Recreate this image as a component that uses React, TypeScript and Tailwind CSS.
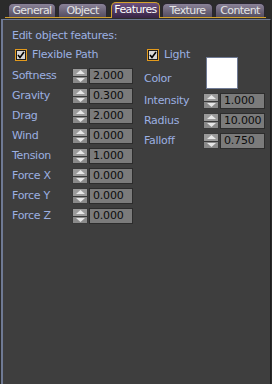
import React from "react";

const font = { fontFamily: '"DejaVu Sans", sans-serif' };

function Tab({ label, width, active }: { label: string; width: string; active?: boolean }) {
  if (active) {
    return (
      <div className={`${width} h-[15px] mt-[2px] rounded-t-[5px] border border-b-0 border-[#d4a22c] bg-gradient-to-b from-[#6d5080] to-[#3b2748] text-white text-[11px] tracking-[-0.6px] leading-[14px] flex items-center justify-center`}>
        {label}
      </div>
    );
  }
  return (
    <div className={`${width} h-[14px] mt-[3px] rounded-t-[5px] border border-b-0 border-[#2a2630] bg-gradient-to-b from-[#8a8298] to-[#554e60] text-[#e4e4e4] text-[11px] tracking-[-0.6px] leading-[13px] flex items-center justify-center`}>
      {label}
    </div>
  );
}

function Check({ label }: { label: string }) {
  return (
    <div className="h-[12px] flex items-center gap-[5px]">
      <div className="w-[12px] h-[12px] border border-[#e39a1c] bg-[#1c1c1c] p-[1px]">
        <div className="w-full h-full bg-[#d6d6d6] flex items-center justify-center">
          <svg width="8" height="8" viewBox="0 0 8 8">
            <path d="M1 4 L3 6.5 L7 1" stroke="#000" strokeWidth="1.6" fill="none" />
          </svg>
        </div>
      </div>
      <span className="text-[11px] tracking-[-0.3px] leading-[12px] text-[#9cb0e2]">{label}</span>
    </div>
  );
}

function Spinner() {
  return (
    <div className="w-[16px] h-[16px] flex flex-col bg-[#6e6e6e] border border-[#3a3a3a]">
      <div className="flex-1 flex items-center justify-center bg-[#9a9a9a] border-b border-[#3a3a3a]">
        <svg width="9" height="4" viewBox="0 0 9 4"><path d="M0 4 L4.5 0 L9 4 Z" fill="#e6e6e6" /></svg>
      </div>
      <div className="flex-1 flex items-center justify-center bg-[#8a8a8a]">
        <svg width="9" height="4" viewBox="0 0 9 4"><path d="M0 0 L4.5 4 L9 0 Z" fill="#e6e6e6" /></svg>
      </div>
    </div>
  );
}

function Row({ label, value, labelW, fieldW }: { label: string; value: string; labelW: string; fieldW: string }) {
  return (
    <div className="h-[16px] flex items-center">
      <span className={`${labelW} text-[11px] tracking-[-0.3px] leading-[16px] text-[#9cb0e2]`}>{label}</span>
      <Spinner />
      <div className={`${fieldW} h-[16px] ml-[1px] border border-[#2c2c2c] bg-[#7b7b7b] text-[11px] tracking-[-0.2px] leading-[14px] text-[#0c0c0c] pl-[3px]`}>
        {value}
      </div>
    </div>
  );
}

const left = [
  ["Softness", "2.000"],
  ["Gravity", "0.300"],
  ["Drag", "2.000"],
  ["Wind", "0.000"],
  ["Tension", "1.000"],
  ["Force X", "0.000"],
  ["Force Y", "0.000"],
  ["Force Z", "0.000"],
];

const right = [
  ["Intensity", "1.000"],
  ["Radius", "10.000"],
  ["Falloff", "0.750"],
];

export default function App() {
  return (
    <div className="w-[272px] h-[384px] bg-[#2b2b2b] flex flex-col" style={font}>
      <div className="h-[18px] flex pl-[8px] relative">
        <Tab label="General" width="w-[48px]" />
        <div className="w-[2px]" />
        <Tab label="Object" width="w-[49px]" />
        <div className="w-[4px]" />
        <Tab label="Features" width="w-[49px]" active />
        <div className="w-[2px]" />
        <Tab label="Texture" width="w-[51px]" />
        <div className="w-[2px]" />
        <Tab label="Content" width="w-[50px]" />
        <div className="absolute left-[5px] right-[6px] bottom-0 h-[1px] bg-[#d4a22c]" />
        <div className="absolute left-[112px] w-[47px] bottom-0 h-[1px] bg-[#3b2748]" />
      </div>
      <div className="flex-1 ml-[1px] mr-[1px] border-l-2 border-t border-[#6f7a94] border-r border-r-[#1e1e1e] bg-[#3e3e3e] mt-[1px] pl-[9px] pt-[9px]">
        <div className="text-[11px] tracking-[-0.3px] leading-[14px] text-[#9cb0e2]">Edit object features:</div>
        <div className="flex mt-[6px]">
          <div className="w-[132px] flex flex-col">
            <div className="pl-[3px]"><Check label="Flexible Path" /></div>
            <div className="flex flex-col gap-[4px] mt-[7px]">
              {left.map(([l, v]) => (
                <Row key={l} label={l} value={v} labelW="w-[60px]" fieldW="w-[44px]" />
              ))}
            </div>
          </div>
          <div className="flex flex-col">
            <div className="pl-[3px]"><Check label="Light" /></div>
            <div className="h-[32px] mt-[-4px] flex">
              <span className="w-[62px] self-end mb-[2px] text-[11px] tracking-[-0.3px] leading-[16px] text-[#9cb0e2]">Color</span>
              <div className="w-[32px] h-[32px] border border-[#6f7a94] bg-white" />
            </div>
            <div className="flex flex-col gap-[4px] mt-[4px]">
              {right.map(([l, v]) => (
                <Row key={l} label={l} value={v} labelW="w-[59px]" fieldW="w-[45px]" />
              ))}
            </div>
          </div>
        </div>
      </div>
    </div>
  );
}
